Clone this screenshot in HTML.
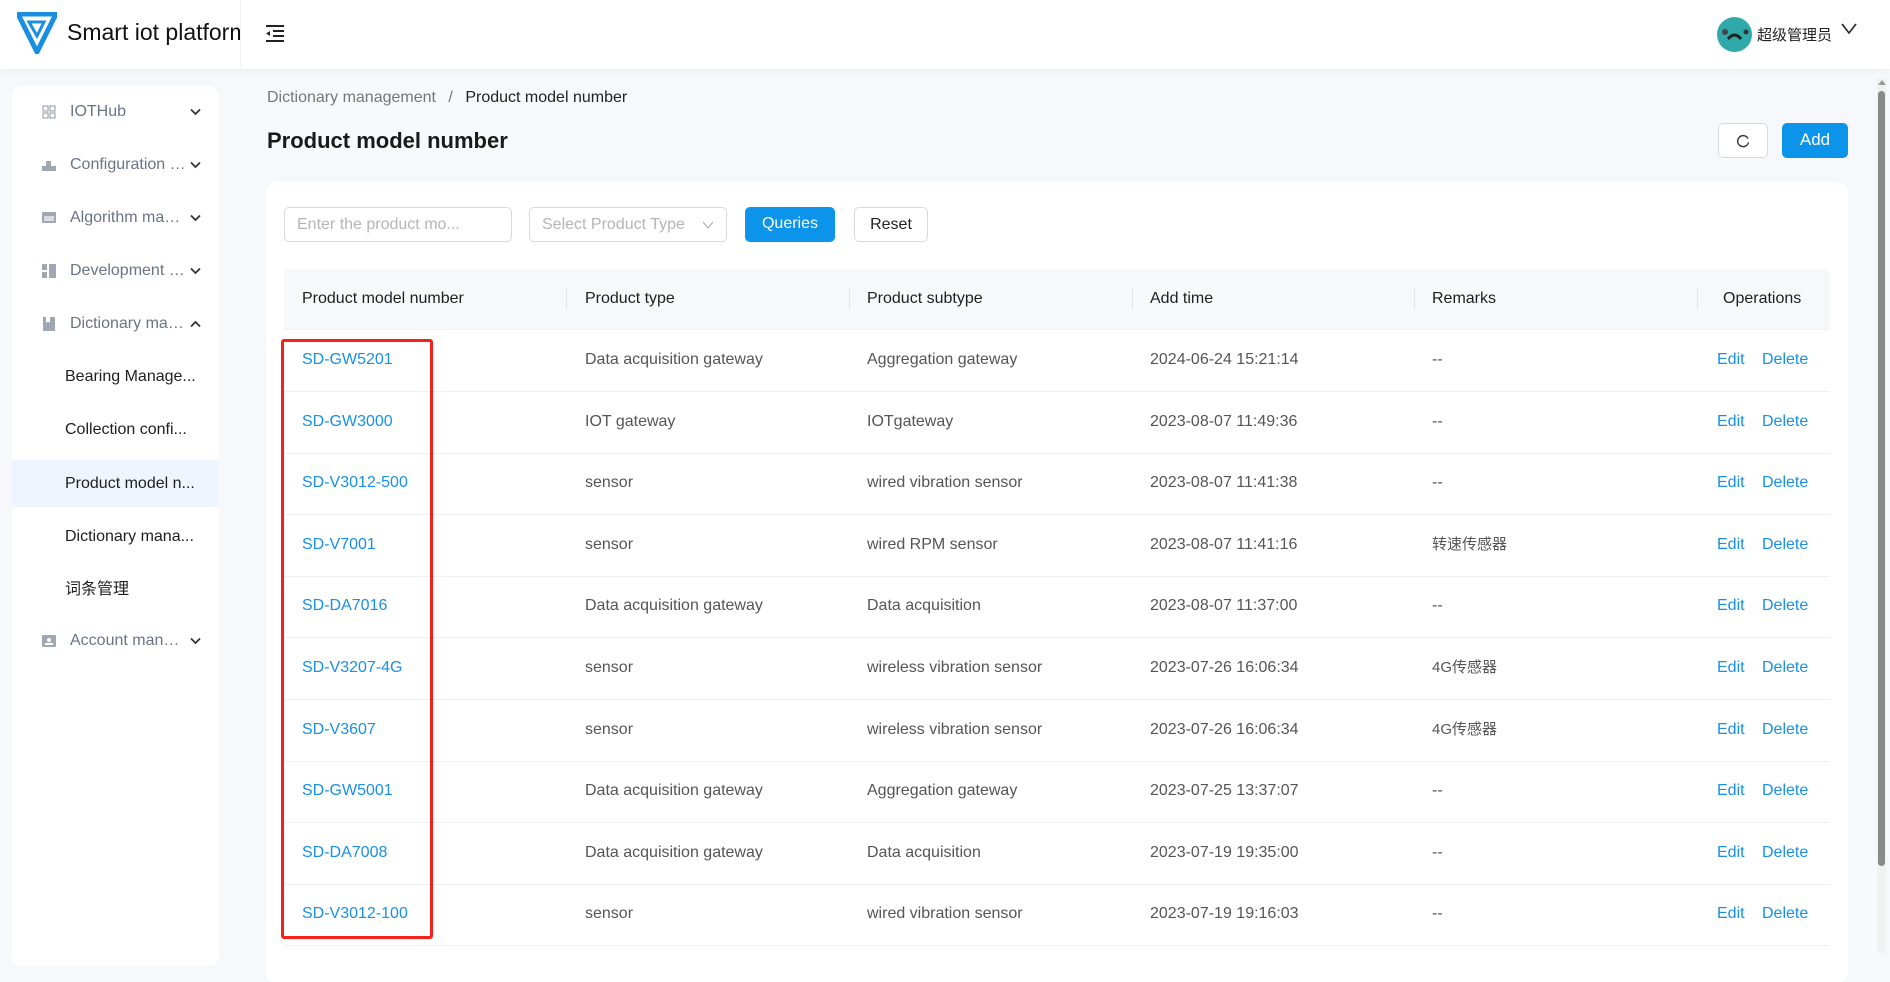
<!DOCTYPE html>
<html><head><meta charset="utf-8"><style>
*{box-sizing:border-box;margin:0;padding:0}
body{width:1890px;height:953px;overflow:hidden;background:#f7f8fb;font-family:"Liberation Sans","Noto Sans CJK SC",sans-serif;color:#1f1f1f;position:relative}
.abs{position:absolute}
.header{left:0;top:0;width:1890px;height:69px;background:#fff;box-shadow:0 2px 8px rgba(0,0,0,.04)}
.side{left:12px;top:86px;width:207px;height:880px;background:#fff;border-radius:10px}
.mi{position:absolute;left:0;width:207px;height:44px;line-height:44px;font-size:16px;color:#6b7385}
.mi .ic{position:absolute;left:30px;top:15px;width:14px;height:14px}
.mi .t{position:absolute;left:58px;width:118px;overflow:hidden;white-space:nowrap;text-overflow:ellipsis}
.sub{position:absolute;left:0;width:207px;height:47px;line-height:47px;font-size:16px;color:#1f1f1f;padding-left:53px;white-space:nowrap;overflow:hidden}
.card{left:266px;top:182px;width:1582px;height:800px;background:#fff;border-radius:10px}
.inp{position:absolute;height:35px;border:1px solid #d9d9d9;border-radius:5px;font-size:16px;color:#b5b5b5;line-height:33px;padding-left:12px;background:#fff}
.btn{position:absolute;height:35px;border-radius:5px;font-size:16px;line-height:33px;text-align:center}
.th{position:absolute;top:269px;height:60px;line-height:60px;font-size:16px;color:#1f1f1f}
.sep{position:absolute;top:288px;width:1px;height:22px;background:#e5e5e5}
.row{position:absolute;left:284px;width:1546px;height:1px;background:#eef0f3}
.c{position:absolute;font-size:16px;color:#555;line-height:20px}
.l{color:#1890e6}
.chev{position:absolute;left:178px}
</style></head><body>
<div class="abs header"></div>
<svg class="abs" style="left:17px;top:12px" width="40" height="42" viewBox="0 0 40 42"><path d="M1 2 L39 2 L20 40 Z" fill="none" stroke="#1a8fe0" stroke-width="5" stroke-linejoin="round"/><path d="M12 10 L27 10 L20 24 Z" fill="none" stroke="#1a8fe0" stroke-width="3"/></svg>
<div class="abs" style="left:67px;top:19px;font-size:23px;color:#111;width:174px;overflow:hidden;white-space:nowrap">Smart iot platform</div>
<div class="abs" style="left:240px;top:0;width:1px;height:69px;background:#f3f4f6"></div>
<svg class="abs" style="left:265px;top:24px" width="20" height="18" viewBox="0 0 20 18"><path d="M1 2H19M8 7H19M8 12H19M1 17H19" stroke="#222" stroke-width="2"/><path d="M5 7L1 9.5 5 12Z" fill="#222"/></svg>
<svg class="abs" style="left:1717px;top:17px" width="35" height="35" viewBox="0 0 35 35"><circle cx="17.5" cy="17.5" r="17.5" fill="#2fa9a9"/><circle cx="8" cy="15" r="3" fill="#444"/><circle cx="29" cy="15" r="2.5" fill="#333"/><path d="M11 22 Q17.5 14 24 22" stroke="#222" stroke-width="3" fill="none"/></svg>
<div class="abs" style="left:1757px;top:24px;font-size:15px;color:#222">超级管理员</div>
<svg class="abs" style="left:1841px;top:23px" width="16" height="12" viewBox="0 0 16 12"><path d="M1 1L8 10L15 1" stroke="#222" stroke-width="1.6" fill="none"/></svg>
<div class="abs" style="left:1877px;top:78px;width:9px;height:875px;background:#f1f1f1"></div>
<div class="abs" style="left:1878px;top:91px;width:7px;height:775px;background:#8a8a8a;border-radius:4px"></div>
<div class="abs" style="left:1878px;top:80px;width:0;height:0;border-left:4px solid transparent;border-right:4px solid transparent;border-bottom:5px solid #999"></div>

<div class="abs side">
<div class="mi" style="top:4px"><svg class="ic" viewBox="0 0 14 14"><g fill="none" stroke="#a0a6b2" stroke-width="1.2"><rect x="1" y="1" width="5" height="5"/><rect x="8" y="1" width="5" height="5"/><rect x="1" y="8" width="5" height="5"/><rect x="8" y="8" width="5" height="5"/></g></svg><span class="t">IOTHub</span></div>
<div class="mi" style="top:57px"><svg class="ic" viewBox="0 0 14 14"><rect x="0" y="8" width="14" height="5" fill="#a0a6b2"/><rect x="4" y="3" width="5" height="5" fill="#a0a6b2"/></svg><span class="t">Configuration management</span></div>
<div class="mi" style="top:110px"><svg class="ic" viewBox="0 0 14 14"><rect x="0" y="1" width="14" height="11" rx="1" fill="#a0a6b2"/><rect x="2" y="5" width="10" height="5" fill="#fff" opacity=".6"/></svg><span class="t">Algorithm management</span></div>
<div class="mi" style="top:163px"><svg class="ic" viewBox="0 0 14 14"><rect x="0" y="0" width="5" height="6" fill="#a0a6b2"/><rect x="0" y="8" width="5" height="6" fill="#a0a6b2"/><rect x="7" y="0" width="7" height="14" fill="#a0a6b2"/></svg><span class="t">Development tools</span></div>
<div class="mi" style="top:216px"><svg class="ic" viewBox="0 0 14 14"><path d="M1 0H13V14H1Z" fill="#a0a6b2"/><path d="M4 0V6L6 4.5 8 6V0" fill="#fff"/></svg><span class="t">Dictionary management</span></div>
<div class="sub" style="top:267px">Bearing Manage...</div>
<div class="sub" style="top:320px">Collection confi...</div>
<div class="sub" style="top:374px;background:#eef5ff">Product model n...</div>
<div class="sub" style="top:427px">Dictionary mana...</div>
<div class="sub" style="top:480px">词条管理</div>
<div class="mi" style="top:533px"><svg class="ic" viewBox="0 0 14 14"><rect x="0" y="1" width="14" height="12" rx="1" fill="#a0a6b2"/><circle cx="7" cy="6" r="2" fill="#fff"/><rect x="3" y="9" width="8" height="2" fill="#fff"/></svg><span class="t">Account management</span></div>
<svg class="chev" style="top:22px" width="11" height="8" viewBox="0 0 11 8"><path d="M1 1.5L5.5 6 10 1.5" stroke="#333" stroke-width="1.8" fill="none"/></svg>
<svg class="chev" style="top:75px" width="11" height="8" viewBox="0 0 11 8"><path d="M1 1.5L5.5 6 10 1.5" stroke="#333" stroke-width="1.8" fill="none"/></svg>
<svg class="chev" style="top:128px" width="11" height="8" viewBox="0 0 11 8"><path d="M1 1.5L5.5 6 10 1.5" stroke="#333" stroke-width="1.8" fill="none"/></svg>
<svg class="chev" style="top:181px" width="11" height="8" viewBox="0 0 11 8"><path d="M1 1.5L5.5 6 10 1.5" stroke="#333" stroke-width="1.8" fill="none"/></svg>
<svg class="chev" style="top:234px" width="11" height="8" viewBox="0 0 11 8"><path d="M1 6.5L5.5 2 10 6.5" stroke="#333" stroke-width="1.8" fill="none"/></svg>
<svg class="chev" style="top:551px" width="11" height="8" viewBox="0 0 11 8"><path d="M1 1.5L5.5 6 10 1.5" stroke="#333" stroke-width="1.8" fill="none"/></svg>
</div>

<div class="abs" style="left:267px;top:89px;font-size:16px;color:#777">Dictionary management <span style="margin:0 8px">/</span> <span style="color:#222">Product model number</span></div>
<div class="abs" style="left:267px;top:128px;font-size:22px;font-weight:bold;color:#1a1a1a">Product model number</div>
<div class="btn" style="left:1718px;top:123px;width:50px;border:1px solid #d9d9d9;background:#fff"><svg width="14" height="14" viewBox="0 0 14 14" style="margin-top:10px"><path d="M12 4.5A5.5 5.5 0 1 0 12.5 8.5" stroke="#333" stroke-width="1.4" fill="none"/></svg></div>
<div class="btn" style="left:1782px;top:123px;width:66px;background:#0c93ea;color:#fff;font-size:17px">Add</div>

<div class="abs card"></div>
<div class="inp" style="left:284px;top:207px;width:228px">Enter the product mo...</div>
<div class="inp" style="left:529px;top:207px;width:198px">Select Product Type<span style="position:absolute;right:12px;top:0"><svg width="12" height="8" viewBox="0 0 12 8"><path d="M1 1L6 7 11 1" stroke="#aaa" fill="none"/></svg></span></div>
<div class="btn" style="left:745px;top:207px;width:90px;background:#0c93ea;color:#fff">Queries</div>
<div class="btn" style="left:854px;top:207px;width:74px;border:1px solid #d9d9d9;background:#fff;color:#222">Reset</div>

<div class="abs" style="left:284px;top:269px;width:1546px;height:60px;background:#f7f8fa"></div>
<div class="th" style="left:302px">Product model number</div>
<div class="th" style="left:585px">Product type</div>
<div class="th" style="left:867px">Product subtype</div>
<div class="th" style="left:1150px">Add time</div>
<div class="th" style="left:1432px">Remarks</div>
<div class="th" style="left:1723px">Operations</div>
<div class="sep" style="left:566px"></div><div class="sep" style="left:849px"></div><div class="sep" style="left:1132px"></div><div class="sep" style="left:1414px"></div><div class="sep" style="left:1697px"></div>
<div class="row" style="top:329px"></div>

<div id="rows"></div>
<div class="abs" style="left:281px;top:339px;width:152px;height:600px;border:3px solid #f5211b;border-radius:3px"></div>
<script>
var d=[["SD-GW5201","Data acquisition gateway","Aggregation gateway","2024-06-24 15:21:14","--"],
["SD-GW3000","IOT gateway","IOTgateway","2023-08-07 11:49:36","--"],
["SD-V3012-500","sensor","wired vibration sensor","2023-08-07 11:41:38","--"],
["SD-V7001","sensor","wired RPM sensor","2023-08-07 11:41:16","转速传感器"],
["SD-DA7016","Data acquisition gateway","Data acquisition","2023-08-07 11:37:00","--"],
["SD-V3207-4G","sensor","wireless vibration sensor","2023-07-26 16:06:34","4G传感器"],
["SD-V3607","sensor","wireless vibration sensor","2023-07-26 16:06:34","4G传感器"],
["SD-GW5001","Data acquisition gateway","Aggregation gateway","2023-07-25 13:37:07","--"],
["SD-DA7008","Data acquisition gateway","Data acquisition","2023-07-19 19:35:00","--"],
["SD-V3012-100","sensor","wired vibration sensor","2023-07-19 19:16:03","--"]];
var h="",x=[302,585,867,1150,1432];
d.forEach(function(r,i){var y=350+i*61.6;
r.forEach(function(v,j){h+='<div class="c'+(j==0?' l':'')+'" style="left:'+x[j]+'px;top:'+y+'px;font-size:'+(j==4&&v!="--"?15:16)+'px">'+v+'</div>';});
h+='<div class="c l" style="left:1717px;top:'+y+'px">Edit</div><div class="c l" style="left:1762px;top:'+y+'px">Delete</div>';
h+='<div class="row" style="top:'+(y+41)+'px"></div>';});
document.getElementById("rows").innerHTML=h;
</script>
</body></html>
